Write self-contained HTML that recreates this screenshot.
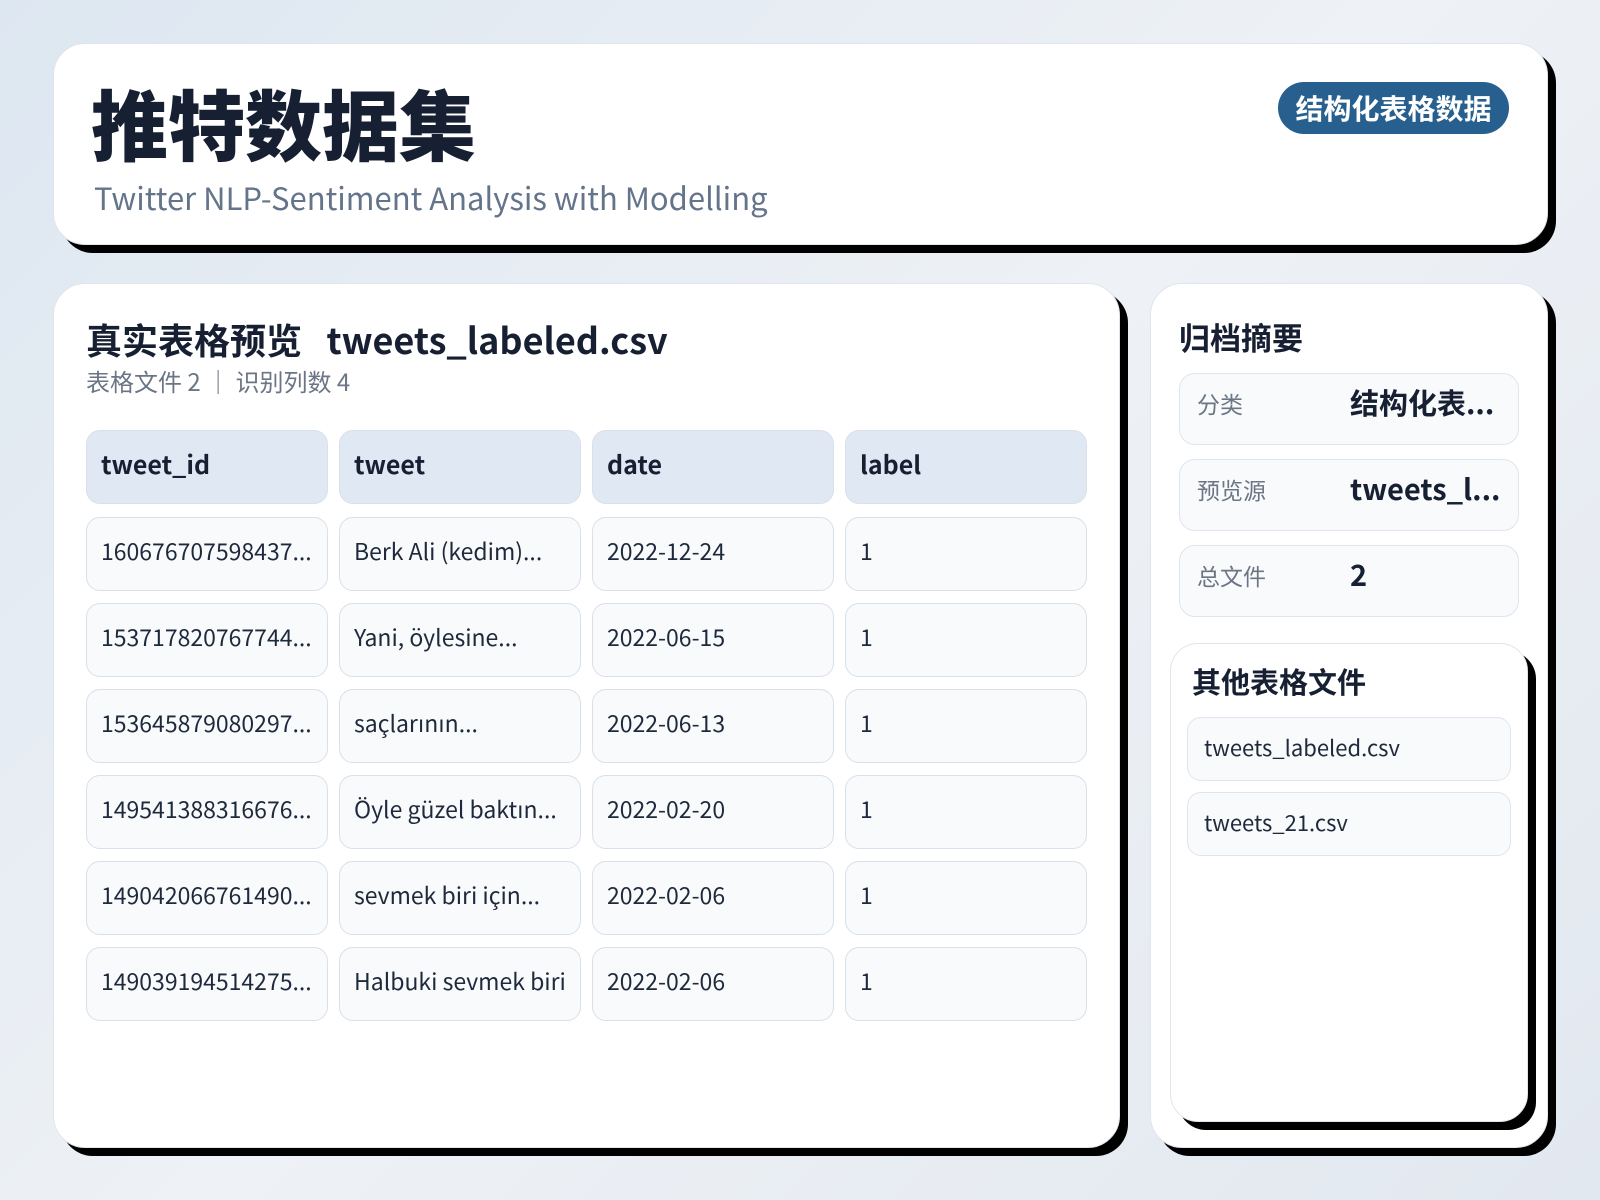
<!DOCTYPE html>
<html><head><meta charset="utf-8"><style>
*{box-sizing:border-box;margin:0;padding:0}
body{width:1600px;height:1200px;overflow:hidden;background:linear-gradient(135deg,#dde7f1 0%,#eef1f5 50%,#e2e8f0 100%);font-family:"Noto Sans CJK SC","Liberation Sans",sans-serif;color:#172033;position:relative}
.card{position:absolute;background:#fff;border-radius:32px;border:1px solid #dfe5ee;box-shadow:8px 8px 0 #000}
.t{position:absolute;white-space:nowrap;line-height:1.2}
.cell{position:absolute;width:242px;height:74px;border-radius:14px;border:1px solid #d9e0ea;background:#f8fafc;font-size:23px;padding-left:14px;line-height:64px;color:#1e293b;overflow:hidden}
.hd{background:#e0e8f3;font-weight:bold;font-size:25px;color:#172033;line-height:66px}
.row{position:absolute;left:1179px;width:340px;height:72px;border-radius:16px;border:1px solid #dfe5ee;background:#f8fafc}
.row .l{position:absolute;left:17px;top:0;line-height:58px;font-size:23px;color:#6b7585}
.row .v{position:absolute;left:170px;top:0;line-height:56px;font-size:29px;font-weight:bold;color:#172033}
.f{position:absolute;left:1187px;width:324px;height:64px;border-radius:14px;border:1px solid #dfe5ee;background:#f8fafc;font-size:22px;line-height:58px;padding-left:16px;color:#1e293b}
</style></head><body>
<div class="card" style="left:53px;top:43px;width:1495px;height:202px"></div>
<div class="t" style="left:91px;top:81px;font-size:77px;line-height:1.1;font-weight:900;color:#172033">推特数据集</div>
<div class="t" style="left:94px;top:178px;font-size:31px;color:#64748b">Twitter NLP-Sentiment Analysis with Modelling</div>
<div class="t" style="left:1278px;top:82px;width:231px;height:52px;border-radius:26px;background:#27608f;color:#fff;font-size:28px;font-weight:bold;text-align:center;line-height:52px">结构化表格数据</div>

<div class="card" style="left:53px;top:283px;width:1067px;height:865px"></div>
<div class="t" style="left:86px;top:318px;font-size:36px;font-weight:bold;color:#172033">真实表格预览&nbsp;&nbsp;&nbsp;tweets_labeled.csv</div>
<div class="t" style="left:86px;top:367px;font-size:24px;color:#6b7585">表格文件 2 ｜ 识别列数 4</div>

<div class="cell hd" style="left:86px;top:430px">tweet_id</div>
<div class="cell hd" style="left:339px;top:430px">tweet</div>
<div class="cell hd" style="left:592px;top:430px">date</div>
<div class="cell hd" style="left:845px;top:430px">label</div>

<div class="cell" style="left:86px;top:517px">160676707598437...</div><div class="cell" style="left:339px;top:517px">Berk Ali (kedim)...</div><div class="cell" style="left:592px;top:517px">2022-12-24</div><div class="cell" style="left:845px;top:517px">1</div>
<div class="cell" style="left:86px;top:603px">153717820767744...</div><div class="cell" style="left:339px;top:603px">Yani, öylesine...</div><div class="cell" style="left:592px;top:603px">2022-06-15</div><div class="cell" style="left:845px;top:603px">1</div>
<div class="cell" style="left:86px;top:689px">153645879080297...</div><div class="cell" style="left:339px;top:689px">saçlarının...</div><div class="cell" style="left:592px;top:689px">2022-06-13</div><div class="cell" style="left:845px;top:689px">1</div>
<div class="cell" style="left:86px;top:775px">149541388316676...</div><div class="cell" style="left:339px;top:775px">Öyle güzel baktın...</div><div class="cell" style="left:592px;top:775px">2022-02-20</div><div class="cell" style="left:845px;top:775px">1</div>
<div class="cell" style="left:86px;top:861px">149042066761490...</div><div class="cell" style="left:339px;top:861px">sevmek biri için...</div><div class="cell" style="left:592px;top:861px">2022-02-06</div><div class="cell" style="left:845px;top:861px">1</div>
<div class="cell" style="left:86px;top:947px">149039194514275...</div><div class="cell" style="left:339px;top:947px">Halbuki sevmek biri</div><div class="cell" style="left:592px;top:947px">2022-02-06</div><div class="cell" style="left:845px;top:947px">1</div>

<div class="card" style="left:1150px;top:283px;width:398px;height:865px"></div>
<div class="t" style="left:1179px;top:318px;font-size:31px;font-weight:bold;color:#172033">归档摘要</div>
<div class="row" style="top:373px"><span class="l">分类</span><span class="v">结构化表...</span></div>
<div class="row" style="top:459px"><span class="l">预览源</span><span class="v">tweets_l...</span></div>
<div class="row" style="top:545px"><span class="l">总文件</span><span class="v">2</span></div>

<div class="card" style="left:1170px;top:643px;width:358px;height:479px;border-radius:28px"></div>
<div class="t" style="left:1192px;top:664px;font-size:29px;font-weight:bold;color:#172033">其他表格文件</div>
<div class="f" style="top:717px">tweets_labeled.csv</div>
<div class="f" style="top:792px">tweets_21.csv</div>
</body></html>
